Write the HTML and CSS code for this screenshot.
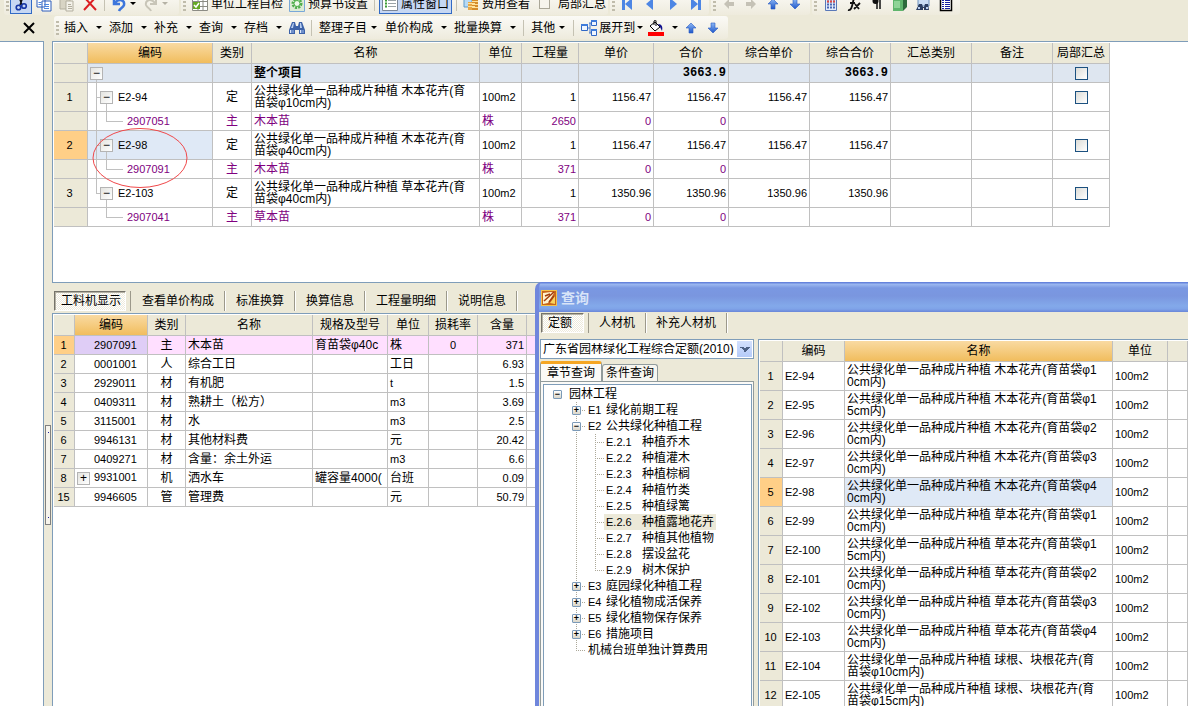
FILE: index.html
```html
<!DOCTYPE html>
<html lang="zh-CN">
<head>
<meta charset="utf-8">
<title>工程计价</title>
<link rel="stylesheet" href="styles.css">
</head>
<body>
<svg class="defs" aria-hidden="true">
  <defs>
    <linearGradient id="blue" x1="0" y1="0" x2="0" y2="1"><stop offset="0" stop-color="#8db8f5"/><stop offset="1" stop-color="#1e56c8"/></linearGradient>
    <symbol id="up" viewBox="0 0 16 16"><path d="M8 3l5 5h-3v5H6V8H3z" fill="url(#blue)" stroke="#2a5bc4" stroke-width=".6"/></symbol>
    <symbol id="down" viewBox="0 0 16 16"><path d="M8 13l5-5h-3V3H6v5H3z" fill="url(#blue)" stroke="#2a5bc4" stroke-width=".6"/></symbol>
    <symbol id="binoculars" viewBox="0 0 16 16"><path d="M3 2h3l1 4h2l1-4h3l3 8v4h-6v-4H6v4H0v-4z" fill="#3d62a8"/><path d="M4 3h1l-1 5H2zM11 3h1l1 5h-2z" fill="#b9cff2"/><path d="M1 10h4v3H1zM11 10h4v3h-4z" fill="#6f8fca"/><path d="M1 10h1v3H1zM11 10h1v3h-1z" fill="#dce8fb"/></symbol>
  </defs>
</svg>
<div class="app">
  <header class="bars">
    <div class="bar-row main-row">
      <div class="toolbar edit">
        <i class="grip"></i>
        <button class="tool on" aria-label="剪切"><svg viewBox="0 0 16 16"><path d="M6 1l3 8M10 1L7 9" stroke="#111" stroke-width="1.5"/><circle cx="5.500" cy="11.500" r="2.300" fill="none" stroke="#1637a5" stroke-width="1.600"/><circle cx="11" cy="10" r="2.300" fill="none" stroke="#1637a5" stroke-width="1.600"/></svg></button>
        <button class="tool" aria-label="复制"><svg viewBox="0 0 16 16"><path d="M1 1h8v10H1zM6 5h9v10H6z" fill="#fff" stroke="#2c5cbb"/><path d="M2.500 6.500h3M2.500 8.500h3M8 8.500h5M8 10.500h5M8 12.500h5" stroke="#4d86dd"/></svg></button>
        <button class="tool" aria-label="粘贴"><svg viewBox="0 0 16 16"><path d="M1 1h10v12H1z" fill="#d8d4c4" stroke="#b3af9f"/><path d="M7 5h7v10H7z" fill="#f4f2ea" stroke="#b3af9f"/><path d="M9 8.500h3M9 10.500h4M9 12.500h4" stroke="#b3af9f"/></svg></button>
        <button class="tool" aria-label="删除"><svg viewBox="0 0 16 16"><path d="M2 1l12 13M14 1L2 14" stroke="#dc1f24" stroke-width="2"/></svg></button>
        <i class="sep"></i>
        <button class="tool" aria-label="撤消"><svg viewBox="0 0 16 16"><path d="M3 2v6h6M4 7c4-5 10-3 9 2-1 3-4 3-5 6" fill="none" stroke="#3d76dc" stroke-width="2.500"/></svg><i class="caret"></i></button>
        <button class="tool" aria-label="重做"><svg viewBox="0 0 16 16"><path d="M13 2v6H7M12 7C8 2 2 4 3 9c1 3 4 3 5 6" fill="none" stroke="#c8c5b8" stroke-width="2"/></svg><i class="caret dim"></i></button>
      </div>
      <div class="toolbar views">
        <i class="grip"></i>
        <button class="tool"><svg viewBox="0 0 16 16"><path d="M.5.5h15v14H.5z" fill="#fff" stroke="#8c8c84"/><path d="M0 5.500h16M0 10.500h16M6 0v15M11 0v15" stroke="#8c8c84"/><path d="M1 6h7v7H1z" fill="#66a824"/><path d="M2 9l2 2 3-4" fill="none" stroke="#fff" stroke-width="1.500"/></svg>单位工程自检</button>
        <button class="tool"><svg viewBox="0 0 16 16"><path d="M.5.5h15v15H.5z" fill="#ddebd6" stroke="#79a8d8"/><circle cx="8" cy="7.500" r="4" fill="none" stroke="#4fae4b" stroke-width="3" stroke-dasharray="2 1"/><circle cx="8" cy="7.500" r="3" fill="#eef8ea" stroke="#4fae4b"/></svg>预算书设置</button>
        <i class="sep"></i>
        <button class="tool on"><svg viewBox="0 0 16 16"><path d="M.5.5h15v14H.5z" fill="#fff" stroke="#7c8798"/><path d="M3 4.500h2M3 7.500h2M3 10.500h2" stroke="#3d9c35" stroke-width="2"/><path d="M6 4.500h8M6 7.500h8M6 10.500h8" stroke="#9aa3a8"/></svg>属性窗口</button>
        <i class="sep"></i>
        <button class="tool"><svg viewBox="0 0 16 16"><path d="M1 0h8v11H1z" fill="#b7daf5" stroke="#5d9bcc"/><path d="M5 6h7v8H5z" fill="#e7a746"/><path d="M9 4h6v10H9z" fill="#d48c2a"/><path d="M5 7.500h7M5 10.500h7M9 5.500h6M9 8.500h6M9 11.500h6" stroke="#ffe29a"/></svg>费用查看</button>
        <label class="tool"><input type="checkbox" class="plain-check">局部汇总</label>
      </div>
      <div class="toolbar nav">
        <i class="grip"></i>
        <button class="tool" aria-label="第一条"><svg viewBox="0 0 16 16"><path d="M3 2h3v12H3zM13 2v12L6 8z" fill="#4d86e4"/></svg></button>
        <button class="tool" aria-label="上一条"><svg viewBox="0 0 16 16"><path d="M11 2v12L4 8z" fill="#4d86e4"/></svg></button>
        <button class="tool" aria-label="下一条"><svg viewBox="0 0 16 16"><path d="M5 2v12l7-6z" fill="#4d86e4"/></svg></button>
        <button class="tool" aria-label="最后一条"><svg viewBox="0 0 16 16"><path d="M10 2h3v12h-3zM3 2v12l7-6z" fill="#4d86e4"/></svg></button>
      </div>
      <div class="toolbar move">
        <i class="grip"></i>
        <button class="tool" aria-label="左移"><svg viewBox="0 0 16 16"><path d="M3 8l5-5v3h5v4H8v3z" fill="#c5c2b6"/></svg></button>
        <button class="tool" aria-label="右移"><svg viewBox="0 0 16 16"><path d="M13 8L8 3v3H3v4h5v3z" fill="#c5c2b6"/></svg></button>
        <button class="tool" aria-label="上移"><svg><use href="#up"/></svg></button>
        <button class="tool" aria-label="下移"><svg><use href="#down"/></svg></button>
      </div>
      <div class="toolbar extras">
        <i class="grip"></i>
        <button class="tool" aria-label="计算器"><svg viewBox="0 0 16 16"><path d="M2.500.5h11v14h-11z" fill="#e4ecfa" stroke="#5978b8"/><path d="M4 5.500h8M4 8.500h8M4 11.500h8" stroke="#4a68b4" stroke-width="2" stroke-dasharray="2 1"/><path d="M4 5.500h8" stroke="#e04a42" stroke-width="2" stroke-dasharray="2 1"/></svg></button>
        <button class="tool" aria-label="函数"><svg viewBox="0 0 16 16"><path d="M2 14c3 1 4-3 5-8s2-5 4-4M4 7h5M9 8l4 5M14 7l-6 6" fill="none" stroke="#111" stroke-width="1.800"/></svg></button>
        <button class="tool" aria-label="段落"><svg viewBox="0 0 16 16"><path d="M8 2v11M11 2v11M5 2h7" stroke="#111" stroke-width="1.500"/><circle cx="6.500" cy="5" r="3" fill="#111"/></svg></button>
        <button class="tool" aria-label="书册"><svg viewBox="0 0 16 16"><path d="M1 4l4-3h10v10l-4 4H1z" fill="#2d6b3c"/><path d="M1 4h10v11H1z" fill="#5fb56c"/><path d="M2 5h6v7H2z" fill="#8fd497"/></svg></button>
        <button class="tool" aria-label="查找打印"><svg viewBox="0 0 16 16"><path d="M3 0h11v10H3z" fill="#c9dcf4" stroke="#6f91bd"/><path d="M4 8h3l1 3h1l1-3h3l1 6h-5v-2H8v2H1z" fill="#2b3e62"/><path d="M3 11h2v2H3zM11 11h2v2h-2z" fill="#b9cff2"/></svg></button>
        <button class="tool" aria-label="清单"><svg viewBox="0 0 16 16"><path d="M2.500.5h11v14h-11z" fill="#fff" stroke="#000" stroke-width="1.500"/><path d="M4 4.500h2M7 4.500h5M4 6.500h2M7 6.500h5M4 8.500h2M7 8.500h5M4 10.500h2M7 10.500h5M4 12.500h2M7 12.500h5" stroke="#1420a0"/></svg></button>
      </div>
    </div>
    <div class="bar-row">
      <div class="pane-head"><button class="close" aria-label="关闭"><svg viewBox="0 0 12 12"><path d="M1 1l10 10M11 1L1 11" stroke="#000" stroke-width="2"/></svg></button></div>
      <div class="toolbar menus">
        <i class="grip"></i>
        <button class="menu">插入<i class="caret"></i></button>
        <button class="menu">添加<i class="caret"></i></button>
        <button class="menu">补充<i class="caret"></i></button>
        <button class="menu">查询<i class="caret"></i></button>
        <button class="menu">存档<i class="caret"></i></button>
        <button class="tool" aria-label="查找"><svg><use href="#binoculars"/></svg></button>
        <i class="sep"></i>
        <button class="menu tight">整理子目<i class="caret"></i></button>
        <button class="menu">单价构成<i class="caret"></i></button>
        <button class="menu">批量换算<i class="caret"></i></button>
        <i class="sep"></i>
        <button class="menu tight">其他<i class="caret"></i></button>
        <i class="sep"></i>
        <button class="menu snug"><svg viewBox="0 0 16 16"><path d="M5 8h4M9 3v10M8 3h3M8 13h3" fill="none" stroke="#4878c8"/><path d="M.5 4.500h6v6h-6zM10.500.5h5v5h-5zM10.500 9.500h5v6h-5z" fill="#eef5ff" stroke="#2f67c5"/><path d="M0 4h7v2H0zM10 0h6v2h-6zM10 9h6v2h-6z" fill="#3f7cdb"/></svg>展开到<i class="caret"></i></button>
        <button class="menu fill" aria-label="填充颜色"><svg viewBox="0 0 16 16"><path d="M2 6l5-4 5 5-5 4z" fill="#fff" stroke="#000"/><path d="M6 5V1c1-1 2-1 2 0v5" fill="none" stroke="#000"/><path d="M10 4c4 0 5 3 4 7l-2-4z" fill="#10108c"/><path d="M0 12h16v4H0z" fill="#f00"/></svg><i class="caret"></i></button>
        <button class="tool arrow" aria-label="向上"><svg><use href="#up"/></svg></button>
        <button class="tool arrow" aria-label="向下"><svg><use href="#down"/></svg></button>
      </div>
    </div>
  </header>

  <div class="work">
    <aside class="side"></aside>
    <div class="gutter"><div class="handle"></div></div>
    <main class="content">
      <section class="panel top-panel">
        <table class="grid estimate">
          <colgroup><col class="w34"><col class="w125"><col class="w39"><col class="w228"><col class="w42"><col class="w57"><col class="w75"><col class="w75"><col class="w81"><col class="w81"><col class="w81"><col class="w81"><col class="w57"></colgroup>
          <thead><tr><th></th><th class="hot">编码</th><th>类别</th><th>名称</th><th>单位</th><th>工程量</th><th>单价</th><th>合价</th><th>综合单价</th><th>综合合价</th><th>汇总类别</th><th>备注</th><th>局部汇总</th></tr></thead>
          <tbody>
            <tr class="total"><th></th><td class="root"><button class="expander" aria-label="折叠">−</button></td><td></td><td>整个项目</td><td></td><td></td><td></td><td class="sum">3663.9</td><td></td><td class="sum">3663.9</td><td></td><td></td><td class="mid"><input type="checkbox" class="check" aria-label="局部汇总"></td></tr>
            <tr class="tall"><th>1</th><td class="branch"><button class="expander" aria-label="折叠">−</button><span class="num">E2-94</span></td><td class="mid">定</td><td>公共绿化单一品种成片种植 木本花卉(育<br>苗袋φ10cm内)</td><td class="num">100m2</td><td class="num end">1</td><td class="num end">1156.47</td><td class="num end">1156.47</td><td class="num end">1156.47</td><td class="num end">1156.47</td><td></td><td></td><td class="mid"><input type="checkbox" class="check" aria-label="局部汇总"></td></tr>
            <tr class="sub"><th></th><td class="leaf num">2907051</td><td class="mid">主</td><td>木本苗</td><td>株</td><td class="num end">2650</td><td class="num end">0</td><td class="num end">0</td><td></td><td></td><td></td><td></td><td></td></tr>
            <tr class="tall"><th class="current">2</th><td class="branch picked"><button class="expander" aria-label="折叠">−</button><span class="num">E2-98</span></td><td class="mid">定</td><td>公共绿化单一品种成片种植 木本花卉(育<br>苗袋φ40cm内)</td><td class="num">100m2</td><td class="num end">1</td><td class="num end">1156.47</td><td class="num end">1156.47</td><td class="num end">1156.47</td><td class="num end">1156.47</td><td></td><td></td><td class="mid"><input type="checkbox" class="check" aria-label="局部汇总"></td></tr>
            <tr class="sub"><th></th><td class="leaf num">2907091</td><td class="mid">主</td><td>木本苗</td><td>株</td><td class="num end">371</td><td class="num end">0</td><td class="num end">0</td><td></td><td></td><td></td><td></td><td></td></tr>
            <tr class="tall"><th>3</th><td class="branch last"><button class="expander" aria-label="折叠">−</button><span class="num">E2-103</span></td><td class="mid">定</td><td>公共绿化单一品种成片种植 草本花卉(育<br>苗袋φ40cm内)</td><td class="num">100m2</td><td class="num end">1</td><td class="num end">1350.96</td><td class="num end">1350.96</td><td class="num end">1350.96</td><td class="num end">1350.96</td><td></td><td></td><td class="mid"><input type="checkbox" class="check" aria-label="局部汇总"></td></tr>
            <tr class="sub"><th></th><td class="leaf last num">2907041</td><td class="mid">主</td><td>草本苗</td><td>株</td><td class="num end">371</td><td class="num end">0</td><td class="num end">0</td><td></td><td></td><td></td><td></td><td></td></tr>
          </tbody>
        </table>
        <svg class="ring" viewBox="0 0 96 62" aria-hidden="true"><ellipse cx="48" cy="31" rx="47" ry="29.500" fill="none" stroke="#f0484a"/></svg>
      </section>

      <nav class="tabs">
        <button class="tab pressed">工料机显示</button><button class="tab">查看单价构成</button><button class="tab">标准换算</button><button class="tab">换算信息</button><button class="tab">工程量明细</button><button class="tab">说明信息</button>
      </nav>

      <section class="panel low-panel">
        <table class="grid parts">
          <colgroup><col class="w21"><col class="w73"><col class="w38"><col class="w127"><col class="w75"><col class="w41"><col class="w49"><col class="w49"><col></colgroup>
          <thead><tr><th></th><th class="hot">编码</th><th>类别</th><th>名称</th><th>规格及型号</th><th>单位</th><th>损耗率</th><th>含量</th><th></th></tr></thead>
          <tbody>
            <tr class="pink"><th class="current">1</th><td class="code num">2907091</td><td class="mid">主</td><td>木本苗</td><td>育苗袋φ40c</td><td>株</td><td class="num mid">0</td><td class="num end">371</td><td></td></tr>
            <tr><th>2</th><td class="code num">0001001</td><td class="mid">人</td><td>综合工日</td><td></td><td>工日</td><td></td><td class="num end">6.93</td><td></td></tr>
            <tr><th>3</th><td class="code num">2929011</td><td class="mid">材</td><td>有机肥</td><td></td><td class="num">t</td><td></td><td class="num end">1.5</td><td></td></tr>
            <tr><th>4</th><td class="code num">0409311</td><td class="mid">材</td><td>熟耕土（松方）</td><td></td><td class="num">m3</td><td></td><td class="num end">3.69</td><td></td></tr>
            <tr><th>5</th><td class="code num">3115001</td><td class="mid">材</td><td>水</td><td></td><td class="num">m3</td><td></td><td class="num end">2.5</td><td></td></tr>
            <tr><th>6</th><td class="code num">9946131</td><td class="mid">材</td><td>其他材料费</td><td></td><td>元</td><td></td><td class="num end">20.42</td><td></td></tr>
            <tr><th>7</th><td class="code num">0409271</td><td class="mid">材</td><td>含量：余土外运</td><td></td><td class="num">m3</td><td></td><td class="num end">6.6</td><td></td></tr>
            <tr><th>8</th><td class="code open num"><button class="expander" aria-label="展开">+</button>9931001</td><td class="mid">机</td><td>洒水车</td><td>罐容量4000(</td><td>台班</td><td></td><td class="num end">0.09</td><td></td></tr>
            <tr><th>15</th><td class="code num">9946605</td><td class="mid">管</td><td>管理费</td><td></td><td>元</td><td></td><td class="num end">50.79</td><td></td></tr>
          </tbody>
        </table>
      </section>
    </main>
  </div>

  <section class="dialog" role="dialog" aria-label="查询">
    <div class="title"><svg viewBox="0 0 16 16"><path d="M0 0h16v16H0z" fill="#f3c24a"/><path d="M1 1h14v14H1z" fill="#c9661a"/><path d="M2 3l8-1 3 1-6 10-5 1z" fill="#fff3cf"/><path d="M3 11l10-9M4 6l5-2M8 12l5-6" stroke="#a33f10" stroke-width="1.500"/><path d="M9 13l5-7v8z" fill="#f8d35c"/></svg>查询</div>
    <div class="dialog-body">
      <nav class="tabs dialog-tabs"><button class="tab pressed wide">定额</button><button class="tab">人材机</button><button class="tab">补充人材机</button></nav>
      <div class="split">
        <div class="finder">
          <select class="book" aria-label="定额库"><option>广东省园林绿化工程综合定额(2010)</option></select>
          <div class="subtabs"><button class="subtab active">章节查询</button><button class="subtab">条件查询</button></div>
          <div class="sheet">
            <ul class="tree">
              <li class="lv1"><button class="knob" aria-label="折叠">−</button><span>园林工程</span></li>
              <li class="lv2"><button class="knob" aria-label="展开">+</button><b>E1</b><span>绿化前期工程</span></li>
              <li class="lv2"><button class="knob" aria-label="折叠">−</button><b>E2</b><span>公共绿化种植工程</span></li>
              <li class="lv3"><a href="#"><b>E.2.1</b><span>种植乔木</span></a></li>
              <li class="lv3"><a href="#"><b>E.2.2</b><span>种植灌木</span></a></li>
              <li class="lv3"><a href="#"><b>E.2.3</b><span>种植棕榈</span></a></li>
              <li class="lv3"><a href="#"><b>E.2.4</b><span>种植竹类</span></a></li>
              <li class="lv3"><a href="#"><b>E.2.5</b><span>种植绿篱</span></a></li>
              <li class="lv3"><a href="#" class="chosen"><b>E.2.6</b><span>种植露地花卉</span></a></li>
              <li class="lv3"><a href="#"><b>E.2.7</b><span>种植其他植物</span></a></li>
              <li class="lv3"><a href="#"><b>E.2.8</b><span>摆设盆花</span></a></li>
              <li class="lv3 tail"><a href="#"><b>E.2.9</b><span>树木保护</span></a></li>
              <li class="lv2"><button class="knob" aria-label="展开">+</button><b>E3</b><span>庭园绿化种植工程</span></li>
              <li class="lv2"><button class="knob" aria-label="展开">+</button><b>E4</b><span>绿化植物成活保养</span></li>
              <li class="lv2"><button class="knob" aria-label="展开">+</button><b>E5</b><span>绿化植物保存保养</span></li>
              <li class="lv2"><button class="knob" aria-label="展开">+</button><b>E6</b><span>措施项目</span></li>
              <li class="lv2 tail"><span>机械台班单独计算费用</span></li>
            </ul>
          </div>
        </div>
        <div class="results">
          <table class="grid quota">
            <colgroup><col class="w23"><col class="w62"><col class="w268"><col class="w55"><col></colgroup>
            <thead><tr><th></th><th>编码</th><th class="hot">名称</th><th>单位</th><th></th></tr></thead>
            <tbody>
              <tr class="tall"><th>1</th><td class="num">E2-94</td><td>公共绿化单一品种成片种植 木本花卉(育苗袋φ1<br>0cm内)</td><td class="num">100m2</td><td></td></tr>
              <tr class="tall"><th>2</th><td class="num">E2-95</td><td>公共绿化单一品种成片种植 木本花卉(育苗袋φ1<br>5cm内)</td><td class="num">100m2</td><td></td></tr>
              <tr class="tall"><th>3</th><td class="num">E2-96</td><td>公共绿化单一品种成片种植 木本花卉(育苗袋φ2<br>0cm内)</td><td class="num">100m2</td><td></td></tr>
              <tr class="tall"><th>4</th><td class="num">E2-97</td><td>公共绿化单一品种成片种植 木本花卉(育苗袋φ3<br>0cm内)</td><td class="num">100m2</td><td></td></tr>
              <tr class="tall"><th class="current">5</th><td class="num">E2-98</td><td class="lit">公共绿化单一品种成片种植 木本花卉(育苗袋φ4<br>0cm内)</td><td class="num">100m2</td><td></td></tr>
              <tr class="tall"><th>6</th><td class="num">E2-99</td><td>公共绿化单一品种成片种植 草本花卉(育苗袋φ1<br>0cm内)</td><td class="num">100m2</td><td></td></tr>
              <tr class="tall"><th>7</th><td class="num">E2-100</td><td>公共绿化单一品种成片种植 草本花卉(育苗袋φ1<br>5cm内)</td><td class="num">100m2</td><td></td></tr>
              <tr class="tall"><th>8</th><td class="num">E2-101</td><td>公共绿化单一品种成片种植 草本花卉(育苗袋φ2<br>0cm内)</td><td class="num">100m2</td><td></td></tr>
              <tr class="tall"><th>9</th><td class="num">E2-102</td><td>公共绿化单一品种成片种植 草本花卉(育苗袋φ3<br>0cm内)</td><td class="num">100m2</td><td></td></tr>
              <tr class="tall"><th>10</th><td class="num">E2-103</td><td>公共绿化单一品种成片种植 草本花卉(育苗袋φ4<br>0cm内)</td><td class="num">100m2</td><td></td></tr>
              <tr class="tall"><th>11</th><td class="num">E2-104</td><td>公共绿化单一品种成片种植 球根、块根花卉(育<br>苗袋φ10cm内)</td><td class="num">100m2</td><td></td></tr>
              <tr class="tall"><th>12</th><td class="num">E2-105</td><td>公共绿化单一品种成片种植 球根、块根花卉(育<br>苗袋φ15cm内)</td><td class="num">100m2</td><td></td></tr>
            </tbody>
          </table>
        </div>
      </div>
    </div>
  </section>
</div>
</body>
</html>
```
FILE: styles.css
```css
* { box-sizing: border-box; }
body {
  margin: 0;
  background: #ece9d8;
  color: #000;
  font: 12px/12px "Liberation Sans", "Noto Sans CJK SC", sans-serif;
}
button, select, input { font: inherit; color: inherit; margin: 0; }
button { border: 0; padding: 0; background: none; white-space: nowrap; }
svg { width: 16px; height: 16px; flex: none; display: block; }
.defs { position: absolute; width: 0; height: 0; }

.app { position: relative; height: 100vh; display: flex; flex-direction: column; overflow: hidden; }

/* toolbars */
.bars { flex: none; height: 41px; overflow: hidden; }
.bar-row { display: flex; height: 23px; }
.main-row { margin: -8px 0 1px 4px; gap: 2px; }
.toolbar {
  display: flex;
  align-items: center;
  background: linear-gradient(#fbfaf6, #eeebdd);
  border-radius: 3px;
}
.edit { gap: 1px; padding-right: 8px; }
.views { gap: 2px; }
.nav { gap: 1px; padding-right: 2px; }
.move { gap: 0; padding-right: 4px; }
.extras { gap: 1px; padding-right: 3px; }
.grip {
  width: 3px;
  height: 14px;
  margin: 0 2px;
  background: repeating-linear-gradient(#c0bcab 0 2px, transparent 2px 4px);
}
.edit .grip, .nav .grip { margin-right: 0; }
.sep { width: 1px; height: 14px; margin: 0 2px; background: #c5c2b3; }
.tool { display: flex; align-items: center; gap: 3px; height: 21px; padding: 0 3px; }
.views .tool { padding: 0 2px; }
.tool.on { background: #c6d7f3; border: 1px solid #316ac5; padding: 0 2px; }
.caret { border: 3px solid transparent; border-top-color: #000; border-bottom: 0; }
.caret.dim { border-top-color: #b5b2a5; }
.plain-check { appearance: none; width: 11px; height: 11px; border: 1px solid #aaa798; margin: 0 5px 0 3px; background: #f6f4ec; }
.pane-head { width: 54px; padding-left: 23px; display: flex; align-items: center; }
.close svg { width: 12px; height: 12px; }
.menus { padding-right: 4px; }
.menus .grip { margin-right: 5px; }
.menu { display: flex; align-items: center; gap: 8px; padding-right: 7px; }
.menus .tool { padding: 0 6px 0 0; }
.menus .sep { margin: 0 7px 0 0; height: 16px; }
.menu.tight { gap: 4px; padding-right: 8px; }
.menu.snug { gap: 2px; padding-right: 5px; }
.menu.fill { padding-right: 2px; }
.menus .arrow { padding: 0 3px; }

/* workspace */
.work { flex: 1; display: flex; min-height: 0; }
.side { width: 44px; background: #fff; border: 1px solid #7f9db9; border-width: 1px 1px 0 0; }
.gutter { width: 8px; padding: 384px 1px 0; }
.handle {
  height: 100px;
  border: 1px solid #808080;
  background: linear-gradient(#22229c, #22229c) center 6px / 1px 1px no-repeat, linear-gradient(#22229c, #22229c) center 91px / 1px 1px no-repeat, #f6f4ec;
}
.content { flex: 1; min-width: 0; display: flex; flex-direction: column; }
.panel { background: #fff; border: 1px solid #7f9db9; border-width: 1px 0 1px 1px; padding: 1px 0 0 1px; }
.top-panel { position: relative; flex: 0 0 242px; }
.low-panel { flex: 1; overflow: hidden; border-bottom: 0; }
.ring { position: absolute; left: 39px; top: 85px; width: 96px; height: 62px; }

/* tabs */
.tabs { display: flex; align-items: center; height: 30px; padding: 6px 2px 1px; }
.tab { height: 20px; padding: 0 10px 0 11px; border-right: 1px solid #9c998b; box-shadow: 1px 0 #fff; }
.dialog-tabs .tab { padding: 0 10px; }
.tab.pressed {
  padding: 0 4px 0 6px;
  margin-right: 5px;
  border: 1px solid #fff;
  border-top-color: #75736a;
  border-left-color: #75736a;
  background: repeating-conic-gradient(#fff 0 25%, #edeadc 0 50%) 0 0 / 2px 2px;
  box-shadow: inset 1px 1px #b5b2a5;
}
.tab.pressed + .tab { box-shadow: 1px 0 #fff, -1px 0 #9c998b; }
.tab.pressed.wide { padding: 0 11px 0 6px; }

/* grids */
.grid { table-layout: fixed; border-collapse: separate; border-spacing: 0; width: 1056px; }
.parts, .quota { width: 100%; }
.grid th, .grid td {
  height: 19px;
  padding: 0 2px;
  border: 1px solid #c0c0c0;
  border-width: 0 1px 1px 0;
  text-align: left;
  vertical-align: middle;
  font-weight: normal;
  white-space: nowrap;
  overflow: hidden;
}
.grid thead th { height: 21px; background: #ece9d8; text-align: center; }
.grid thead .hot { background: linear-gradient(#f9daa2, #f1bd5d); }
.grid tbody th { background: #ece9d8; text-align: center; font-size: 11px; padding: 0 4px 0 2px; }
.quota tbody th, .parts tbody th { padding: 0 1px 0 0; }
.grid .tall th, .grid .tall td { height: 29px; }
.grid tbody .current { background: #ffcf87; }
.grid .num { font-size: 11px; }
.grid .end { text-align: right; }
.grid .mid { text-align: center; }
.total td { background: #dee6f0; font-weight: bold; }
.grid .sum { font-family: "Liberation Mono", monospace; text-align: right; }
.sub td { color: #800080; }
.pink td { background: #ffdfff; }
.grid .pink .code { background: #dfcdf6; }
.grid .lit { background: #dfe9f6; }

.w21 { width: 21px; } .w23 { width: 23px; } .w34 { width: 34px; } .w38 { width: 38px; }
.w39 { width: 39px; } .w41 { width: 41px; } .w42 { width: 42px; } .w49 { width: 49px; }
.w55 { width: 55px; } .w57 { width: 57px; } .w62 { width: 62px; } .w73 { width: 73px; }
.w75 { width: 75px; } .w81 { width: 81px; } .w125 { width: 125px; } .w127 { width: 127px; }
.w228 { width: 228px; } .w268 { width: 268px; }

.expander {
  width: 13px;
  height: 13px;
  border: 1px solid #b4b4b4;
  background: linear-gradient(135deg, #e4e4e0, #fff);
  font: 12px/10px "Liberation Sans", sans-serif;
  text-align: center;
  vertical-align: middle;
}
.grid .root { background: linear-gradient(silver, silver) 8px 9px / 1px 100% no-repeat, #dee6f0; }
.grid .branch {
  padding-left: 12px;
  background:
    linear-gradient(silver, silver) 8px 0 / 1px 100% no-repeat,
    linear-gradient(silver, silver) 8px 14px / 5px 1px no-repeat,
    linear-gradient(silver, silver) 18px 14px / 1px 100% no-repeat,
    #fff;
}
.grid .picked { background-color: #dfe9f6; }
.grid .branch.last { background-size: 1px 14px, 5px 1px, 1px 100%; }
.branch .num { margin-left: 5px; vertical-align: middle; }
.grid .leaf {
  padding-left: 39px;
  background:
    linear-gradient(silver, silver) 8px 0 / 1px 100% no-repeat,
    linear-gradient(silver, silver) 18px 0 / 1px 9px no-repeat,
    linear-gradient(silver, silver) 18px 9px / 17px 1px no-repeat;
}
.grid .leaf.last { background-size: 0 0, 1px 9px, 17px 1px; }
.grid .code { padding-left: 19px; }
.grid .code.open { padding-left: 2px; }
.code .expander { margin-right: 4px; }
.check {
  appearance: none;
  display: block;
  width: 13px;
  height: 13px;
  margin: 0 auto;
  border: 1px solid #1c5180;
  background: linear-gradient(135deg, #dcdcd7, #fff);
}

/* query window */
.dialog {
  position: absolute;
  left: 535px;
  right: 0;
  top: 282px;
  bottom: 0;
  display: flex;
  flex-direction: column;
  border-left: 4px solid #6f86dc;
  border-radius: 7px 0 0 0;
  background: #6f86dc;
  overflow: hidden;
}
.title {
  flex: none;
  height: 30px;
  display: flex;
  align-items: center;
  gap: 4px;
  padding: 1px 0 0 2px;
  color: #d8e4f8;
  font-size: 14px;
  font-weight: bold;
  background: linear-gradient(#6583dc 0 1px, #9db9f0 2px, #7a98e2 6px, #7a96df 14px, #83a9ea 24px, #7fa3e8 27px, #6a86d8 30px);
}
.dialog-body { flex: 1; min-height: 0; display: flex; flex-direction: column; background: #ece9d8; padding-left: 1px; }
.dialog-tabs { flex: none; height: 27px; padding: 0 1px 6px; }
.split { flex: 1; min-height: 0; display: flex; gap: 4px; }
.finder { width: 214px; flex: none; display: flex; flex-direction: column; }
.book {
  appearance: none;
  height: 20px;
  padding: 0 18px 0 2px;
  border: 1px solid #7f9db9;
  border-radius: 0;
  background:
    linear-gradient(45deg, transparent 50%, #4d6185 50% 85%, transparent 85%) right 8px center / 5px 5px no-repeat,
    linear-gradient(-45deg, transparent 50%, #4d6185 50% 85%, transparent 85%) right 3px center / 5px 5px no-repeat,
    linear-gradient(#d3e0fd, #b5cbf8) right 1px center / 15px 16px no-repeat,
    #fff;
}
.subtabs { display: flex; align-items: flex-end; height: 22px; padding-top: 2px; }
.subtab { height: 17px; padding: 0 3px; border: 1px solid #919b9c; border-bottom: 0; border-radius: 3px 3px 0 0; background: #f7f6f0; }
.subtab.active { height: 20px; padding: 0 6px; border-top: 3px solid #f5a623; background: #fbfaf7; }
.sheet { flex: 1; min-height: 0; border: 1px solid #919b9c; border-bottom: 0; background: #fbfaf7; padding: 2px 1px 0 2px; }
.tree {
  height: 100%;
  margin: 0;
  padding: 1px 0 0;
  list-style: none;
  background: #fff;
  border: 1px solid #7f9db9;
  border-bottom: 0;
}
.tree li { display: flex; align-items: center; height: 16px; white-space: nowrap; }
.tree b { font-weight: normal; width: 18px; font-size: 11px; }
.lv3 b { width: 36px; }
.lv1 { padding-left: 9px; }
.lv2 { padding-left: 28px; }
.lv3 { padding-left: 60px; }
.knob {
  width: 9px;
  height: 9px;
  border: 1px solid #7b9ab8;
  border-radius: 1px;
  background: linear-gradient(#fff, #d9d5c8);
  font: bold 9px/7px "Liberation Sans", sans-serif;
}
.lv1 .knob { margin-right: 7px; }
.lv2 .knob { margin-right: 7px; }
.lv2.tail { padding-left: 44px; }
.lv2, .lv3 {
  --dots: repeating-linear-gradient(#aca899 0 1px, transparent 1px 2px);
  --dash: repeating-linear-gradient(90deg, #aca899 0 1px, transparent 1px 2px);
  background: var(--dots) 32px 0 / 1px 16px no-repeat, var(--dash) 32px 8px / 10px 1px no-repeat;
}
.lv2.tail { background-size: 1px 8px, 10px 1px; }
.lv3 { background: var(--dots) 32px 0 / 1px 16px no-repeat, var(--dots) 51px 0 / 1px 16px no-repeat, var(--dash) 51px 8px / 9px 1px no-repeat; }
.lv3.tail { background-size: 1px 16px, 1px 8px, 9px 1px; }
.tree a { display: flex; align-items: center; height: 16px; padding: 0 2px; color: inherit; text-decoration: none; }
.tree .chosen { background: #ece9d8; }
.results { flex: 1; min-width: 0; overflow: hidden; background: #fff; border: 1px solid #7f9db9; border-width: 1px 0 0 1px; padding: 1px 0 0 1px; }
```
